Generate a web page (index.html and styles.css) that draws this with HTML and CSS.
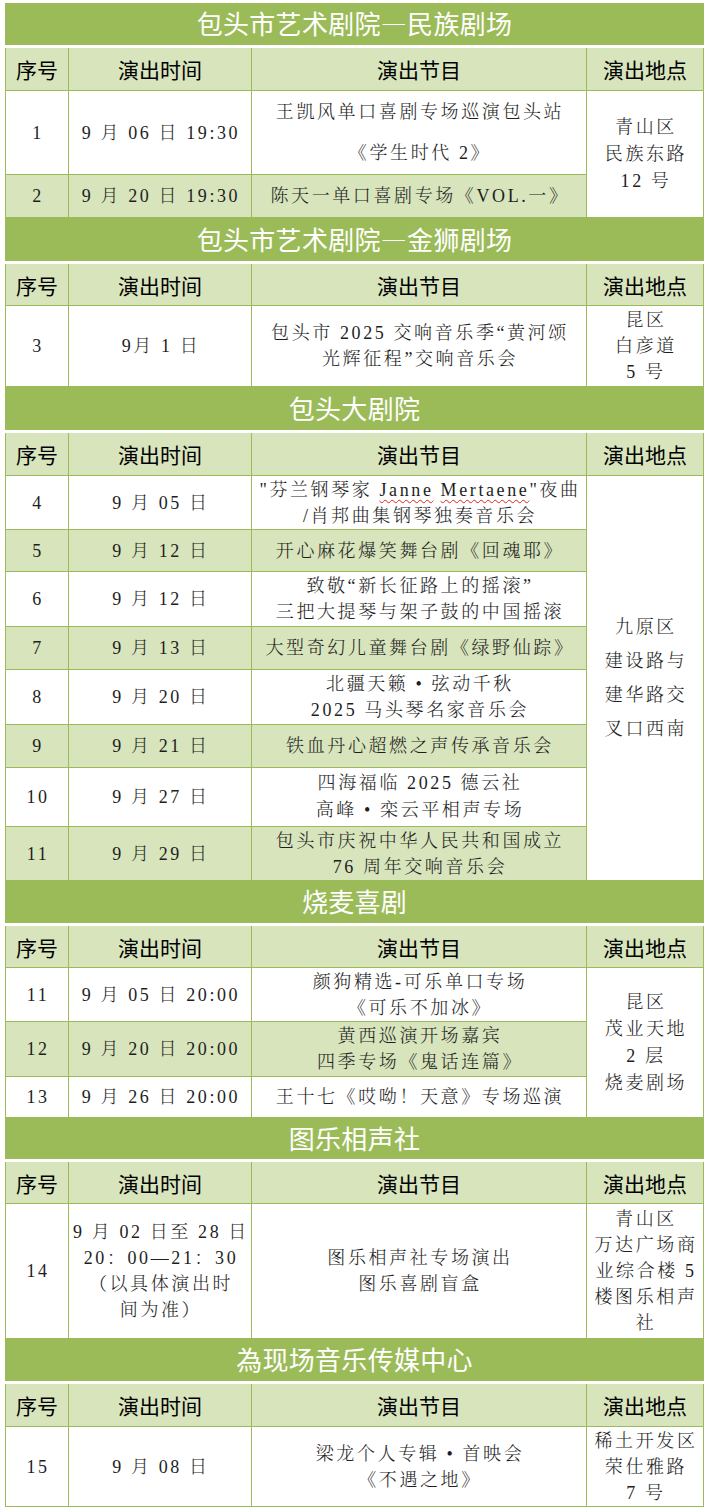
FILE: index.html
```html
<!DOCTYPE html>
<html lang="zh-CN">
<head>
<meta charset="utf-8">
<title>演出信息</title>
<link rel="stylesheet" href="styles.css">
</head>
<body>
<table class="sched">
  <colgroup><col class="c-no"><col class="c-time"><col class="c-prog"><col class="c-loc"></colgroup>
  <tbody>
    <tr class="title-row t45"><td colspan="4" class="title">包头市艺术剧院—民族剧场</td></tr>
    <tr class="head-row h43"><th class="first">序号</th><th>演出时间</th><th>演出节目</th><th>演出地点</th></tr>
    <tr class="r84"><td class="first">1</td><td>9 月 06 日 19:30</td><td class="lh41">王凯风单口喜剧专场巡演包头站<br>《学生时代 2》</td><td rowspan="2" class="loc lh27">青山区<br>民族东路<br>12 号</td></tr>
    <tr class="r43 band"><td class="first">2</td><td>9 月 20 日 19:30</td><td>陈天一单口喜剧专场《VOL.一》</td></tr>

    <tr class="title-row t46"><td colspan="4" class="title">包头市艺术剧院—金狮剧场</td></tr>
    <tr class="head-row h42"><th class="first">序号</th><th>演出时间</th><th>演出节目</th><th>演出地点</th></tr>
    <tr class="r81"><td class="first">3</td><td>9月 1 日</td><td>包头市 2025 交响音乐季“黄河颂<br>光辉征程”交响音乐会</td><td class="loc">昆区<br>白彦道<br>5 号</td></tr>

    <tr class="title-row t46"><td colspan="4" class="title">包头大剧院</td></tr>
    <tr class="head-row h43"><th class="first">序号</th><th>演出时间</th><th>演出节目</th><th>演出地点</th></tr>
    <tr class="r54"><td class="first">4</td><td>9 月 05 日</td><td>"芬兰钢琴家 <span class="typo">Janne</span> <span class="typo">Mertaene</span>"夜曲<br>/肖邦曲集钢琴独奏音乐会</td><td rowspan="8" class="loc lh34">九原区<br>建设路与<br>建华路交<br>叉口西南</td></tr>
    <tr class="r42 band"><td class="first">5</td><td>9 月 12 日</td><td>开心麻花爆笑舞台剧《回魂耶》</td></tr>
    <tr class="r55"><td class="first">6</td><td>9 月 12 日</td><td>致敬“新长征路上的摇滚”<br>三把大提琴与架子鼓的中国摇滚</td></tr>
    <tr class="r43 band"><td class="first">7</td><td>9 月 13 日</td><td>大型奇幻儿童舞台剧《绿野仙踪》</td></tr>
    <tr class="r55"><td class="first">8</td><td>9 月 20 日</td><td>北疆天籁 • 弦动千秋<br>2025 马头琴名家音乐会</td></tr>
    <tr class="r43 band"><td class="first">9</td><td>9 月 21 日</td><td>铁血丹心超燃之声传承音乐会</td></tr>
    <tr class="r59"><td class="first">10</td><td>9 月 27 日</td><td class="lh27">四海福临 2025 德云社<br>高峰 • 栾云平相声专场</td></tr>
    <tr class="r54 band"><td class="first">11</td><td>9 月 29 日</td><td>包头市庆祝中华人民共和国成立<br>76 周年交响音乐会</td></tr>

    <tr class="title-row t45"><td colspan="4" class="title">烧麦喜剧</td></tr>
    <tr class="head-row h42"><th class="first">序号</th><th>演出时间</th><th>演出节目</th><th>演出地点</th></tr>
    <tr class="r54"><td class="first">11</td><td>9 月 05 日 20:00</td><td>颜狗精选-可乐单口专场<br>《可乐不加冰》</td><td rowspan="3" class="loc lh27">昆区<br>茂业天地<br>2 层<br>烧麦剧场</td></tr>
    <tr class="r55 band"><td class="first">12</td><td>9 月 20 日 20:00</td><td>黄西巡演开场嘉宾<br>四季专场《鬼话连篇》</td></tr>
    <tr class="r41"><td class="first">13</td><td>9 月 26 日 20:00</td><td>王十七《哎呦！天意》专场巡演</td></tr>

    <tr class="title-row t44"><td colspan="4" class="title">图乐相声社</td></tr>
    <tr class="head-row h42"><th class="first">序号</th><th>演出时间</th><th>演出节目</th><th>演出地点</th></tr>
    <tr class="r135"><td class="first">14</td><td>9 月 02 日至 28 日<br>20：00—21：30<br>（以具体演出时<br>间为准）</td><td>图乐相声社专场演出<br>图乐喜剧盲盒</td><td class="loc">青山区<br>万达广场商<br>业综合楼 5<br>楼图乐相声<br>社</td></tr>

    <tr class="title-row t45"><td colspan="4" class="title">為现场音乐传媒中心</td></tr>
    <tr class="head-row h43"><th class="first">序号</th><th>演出时间</th><th>演出节目</th><th>演出地点</th></tr>
    <tr class="r80"><td class="first">15</td><td>9 月 08 日</td><td>梁龙个人专辑 • 首映会<br>《不遇之地》</td><td class="loc">稀土开发区<br>荣仕雅路<br>7 号</td></tr>
  </tbody>
</table>
</body>
</html>
```

FILE: styles.css
```css
html, body {
  margin: 0;
  padding: 0;
  background: #ffffff;
}

body {
  padding: 3px 0 0 5px;
}

.sched {
  border-collapse: separate;
  border-spacing: 0;
  table-layout: fixed;
  width: 699px;
}

.c-no { width: 64px; }
.c-time { width: 183px; }
.c-prog { width: 335px; }
.c-loc { width: 117px; }

.sched td,
.sched th {
  box-sizing: border-box;
  border: 0;
  border-right: 1px solid #9bbb59;
  border-bottom: 1px solid #9bbb59;
  padding: 0 0 0 2px;
  text-align: center;
  vertical-align: middle;
  white-space: nowrap;
  overflow: hidden;
}

.sched .first {
  border-left: 1px solid #9bbb59;
}

.sched td {
  font-family: "Liberation Serif", "Noto Serif CJK SC", "Noto Sans CJK SC", serif;
  font-size: 18px;
  font-weight: 300;
  letter-spacing: 2.6px;
  line-height: 26px;
  color: #1e1e1e;
  background: #ffffff;
}

.sched .band td {
  background: #d7e4bc;
}

.sched td.loc {
  background: #ffffff;
}

.sched td.title {
  background: #9bbb59;
  color: #ffffff;
  font-family: "Noto Sans CJK SC", sans-serif;
  font-size: 26px;
  font-weight: 400;
  letter-spacing: 0.3px;
  line-height: 30px;
  padding: 0 0 2px 0;
  border-right: 0;
  border-bottom: 3px solid #ffffff;
}

.sched th {
  background: #d7e4bc;
  color: #000000;
  font-family: "Noto Sans CJK SC", sans-serif;
  font-size: 21px;
  font-weight: 400;
  line-height: 28px;
  padding: 0;
}

.sched td.lh41 { line-height: 41px; }
.sched td.lh34 { line-height: 34px; }
.sched td.lh27 { line-height: 27px; }

.typo {
  text-decoration: underline wavy #e02020;
  text-decoration-thickness: 1px;
  text-underline-offset: 3px;
}

.t44 { height: 44px; }
.t45 { height: 45px; }
.t46 { height: 46px; }
.h42 { height: 42px; }
.h43 { height: 43px; }
.r41 { height: 41px; }
.r42 { height: 42px; }
.r43 { height: 43px; }
.r54 { height: 54px; }
.r55 { height: 55px; }
.r59 { height: 59px; }
.r80 { height: 80px; }
.r81 { height: 81px; }
.r84 { height: 84px; }
.r135 { height: 135px; }
```
